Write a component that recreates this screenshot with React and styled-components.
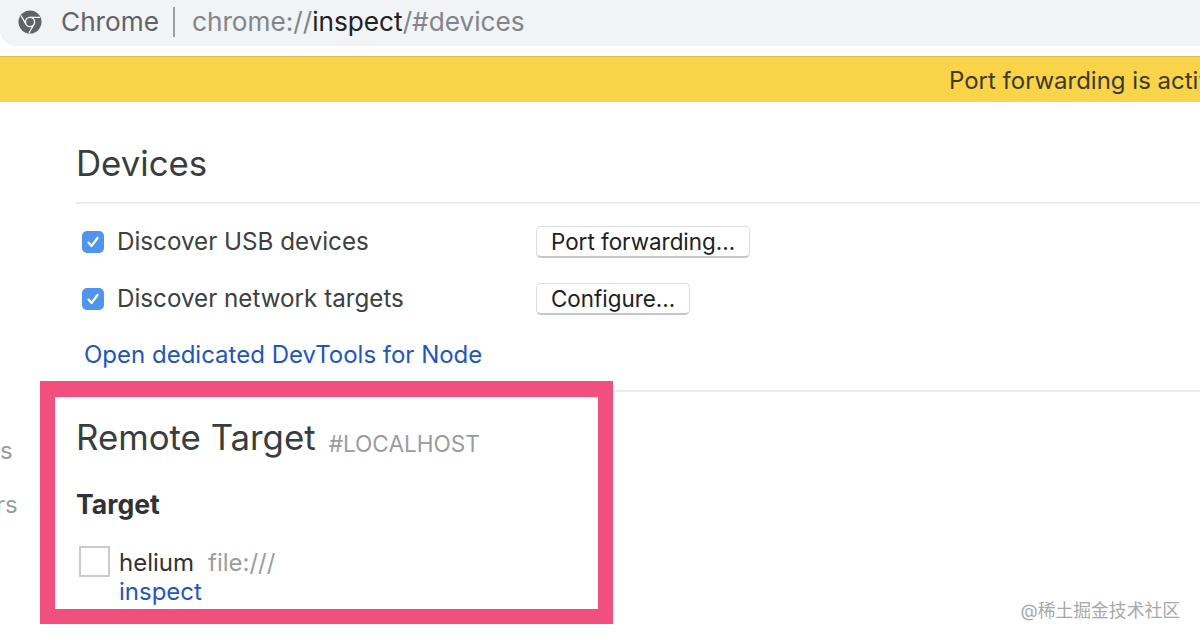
import React from 'react'
import styled, { createGlobalStyle } from 'styled-components'

const Global = createGlobalStyle`
html, body { margin:0; padding:0; background:#fff; }
body { font-family:Inter, "Noto Sans", "Liberation Sans", sans-serif; }
`
const Page = styled.div`
width:1200px;
height:640px;
position:relative;
overflow:hidden;
background:#fff;
display:flex;
flex-direction:column;
`
const AddressBar = styled.div`
height:46px;
flex:none;
background:#f1f3f4;
border-bottom-left-radius:16px;
display:flex;
align-items:center;
padding:0 0 3px 18px;
box-sizing:border-box;
font-size:26.2px;
color:#80868b;
white-space:nowrap;
`
const SiteName = styled.span`
color:#5f6368;
margin-left:19px;
`
const BarDivider = styled.span`
width:2px;
height:30px;
background:#9aa0a6;
margin:0 17px 0 14px;
`
const Strong = styled.span`color:#202124;`
const Banner = styled.div`
height:46px;
flex:none;
margin-top:10px;
box-sizing:border-box;
background:#f9d348;
border-top:1px solid #d9bb5a;
border-bottom:1px solid #ecd27a;
padding:3px 0 0 949px;
display:flex;
align-items:center;
font-size:24px;
color:#3c3a2c;
white-space:nowrap;
`
const Body = styled.div`
flex:1;
display:flex;
`
const Sidebar = styled.div`
width:76px;
flex:none;
padding-top:332px;
box-sizing:border-box;
`
const SideItem = styled.div`
height:54px;
font-size:24px;
line-height:34px;
color:#9a9da0;
margin-left:${props => props.shift || 0}px;
`
const Main = styled.div`
flex:1;
min-width:0;
`
const Heading = styled.h1`
margin:0;
font-weight:400;
font-size:34.8px;
line-height:40px;
color:#3a3d40;
`
const DevicesHeading = styled(Heading)`
padding-top:41px;
padding-bottom:19px;
border-bottom:2px solid #eceded;
`
const OptionRow = styled.div`
height:57px;
display:flex;
align-items:center;
padding-left:6px;
`
const OptionLabel = styled.label`
width:419px;
margin-left:13px;
font-size:24.2px;
color:#3c4043;
white-space:nowrap;
`
const CheckBox = styled.span`
width:22px;
height:22px;
flex:none;
border-radius:5px;
background:#4f94ee;
display:flex;
align-items:center;
justify-content:center;
`
const Button = styled.button`
height:32px;
padding:1px 14px 0;
box-sizing:border-box;
background:#fff;
border:1px solid #dadce0;
border-bottom:2px solid #c4c6c9;
border-radius:5px;
font-family:inherit;
font-size:22.4px;
line-height:28px;
color:#202124;
white-space:nowrap;
`
const NodeLink = styled.a`
display:block;
height:34px;
margin-top:11px;
margin-left:8px;
font-size:24px;
line-height:34px;
color:#2356bd;
white-space:nowrap;
`
const Divider = styled.div`
height:2px;
margin-top:18px;
background:#eceded;
`
const RemoteHeading = styled(Heading)`
margin-top:25px;
display:flex;
align-items:flex-start;
gap:13px;
`
const HostTag = styled.span`
font-size:22.6px;
line-height:27px;
margin-top:13px;
color:#9a9da0;
`
const TargetTitle = styled.div`
margin-top:31px;
font-size:26.6px;
line-height:32px;
font-weight:700;
color:#303236;
`
const TargetRow = styled.div`
margin-top:24px;
margin-left:3px;
display:flex;
`
const EmptyThumb = styled.div`
width:31px;
height:31px;
box-sizing:border-box;
border:2px solid #c9cacb;
flex:none;
margin-top:2px;
`
const TargetInfo = styled.div`
margin-left:9px;
margin-top:2px;
font-size:24px;
line-height:33px;
`
const TargetLine = styled.div`
display:flex;
gap:14px;
color:#303236;
`
const TargetUrl = styled.span`color:#9a9da0;`
const InspectLink = styled.a`color:#2356bd;display:block;line-height:26px;`
const Highlight = styled.div`
position:absolute;
left:40px;
top:381px;
width:573px;
height:243px;
box-sizing:border-box;
border:solid #f1507f;
border-width:16px 15px 15px;
`
const Watermark = styled.div`
position:absolute;
right:20px;
top:600px;
font-size:17.8px;
line-height:22px;
color:#a8a8a8;
font-family:Inter, "Noto Sans CJK SC", sans-serif;
`
const OptionRowSpacer = styled.div`height:9px;`

const ChromeIcon = () => (
  <svg width="24" height="24" viewBox="0 0 24 24">
    <circle cx="12" cy="12" r="11.5" fill="#5f6368" />
    <circle cx="12" cy="12" r="4.6" fill="#5f6368" stroke="#fff" strokeWidth="1.3" />
    <path d="M12 7.4H22M8 14.3L3 5.6M16 14.3L11 23" stroke="#fff" strokeWidth="1.3" fill="none" />
  </svg>
)

const Tick = () => (
  <svg width="14" height="14" viewBox="0 0 14 14">
    <path d="M2.5 7.6L5.6 11L11.5 3" stroke="#fff" strokeWidth="2.2" fill="none" strokeLinecap="round" strokeLinejoin="round" />
  </svg>
)

const Option = ({ label, action }) => (
  <OptionRow>
    <CheckBox><Tick /></CheckBox>
    <OptionLabel>{label}</OptionLabel>
    <Button>{action}</Button>
  </OptionRow>
)

const App = () => {
  return (
    <Page>
      <Global />
      <AddressBar>
        <ChromeIcon />
        <SiteName>Chrome</SiteName>
        <BarDivider />
        chrome://<Strong>inspect</Strong>/#devices
      </AddressBar>
      <Banner>Port forwarding is active</Banner>
      <Body>
        <Sidebar>
          <SideItem>s</SideItem>
          <SideItem shift={-4}>rs</SideItem>
        </Sidebar>
        <Main>
          <DevicesHeading>Devices</DevicesHeading>
          <OptionRowSpacer />
          <Option label="Discover USB devices" action="Port forwarding..." />
          <Option label="Discover network targets" action="Configure..." />
          <NodeLink>Open dedicated DevTools for Node</NodeLink>
          <Divider />
          <RemoteHeading>Remote Target <HostTag>#LOCALHOST</HostTag></RemoteHeading>
          <TargetTitle>Target</TargetTitle>
          <TargetRow>
            <EmptyThumb />
            <TargetInfo>
              <TargetLine>helium <TargetUrl>file:///</TargetUrl></TargetLine>
              <InspectLink>inspect</InspectLink>
            </TargetInfo>
          </TargetRow>
        </Main>
      </Body>
      <Highlight />
      <Watermark>@稀土掘金技术社区</Watermark>
    </Page>
  )
}

export default App
